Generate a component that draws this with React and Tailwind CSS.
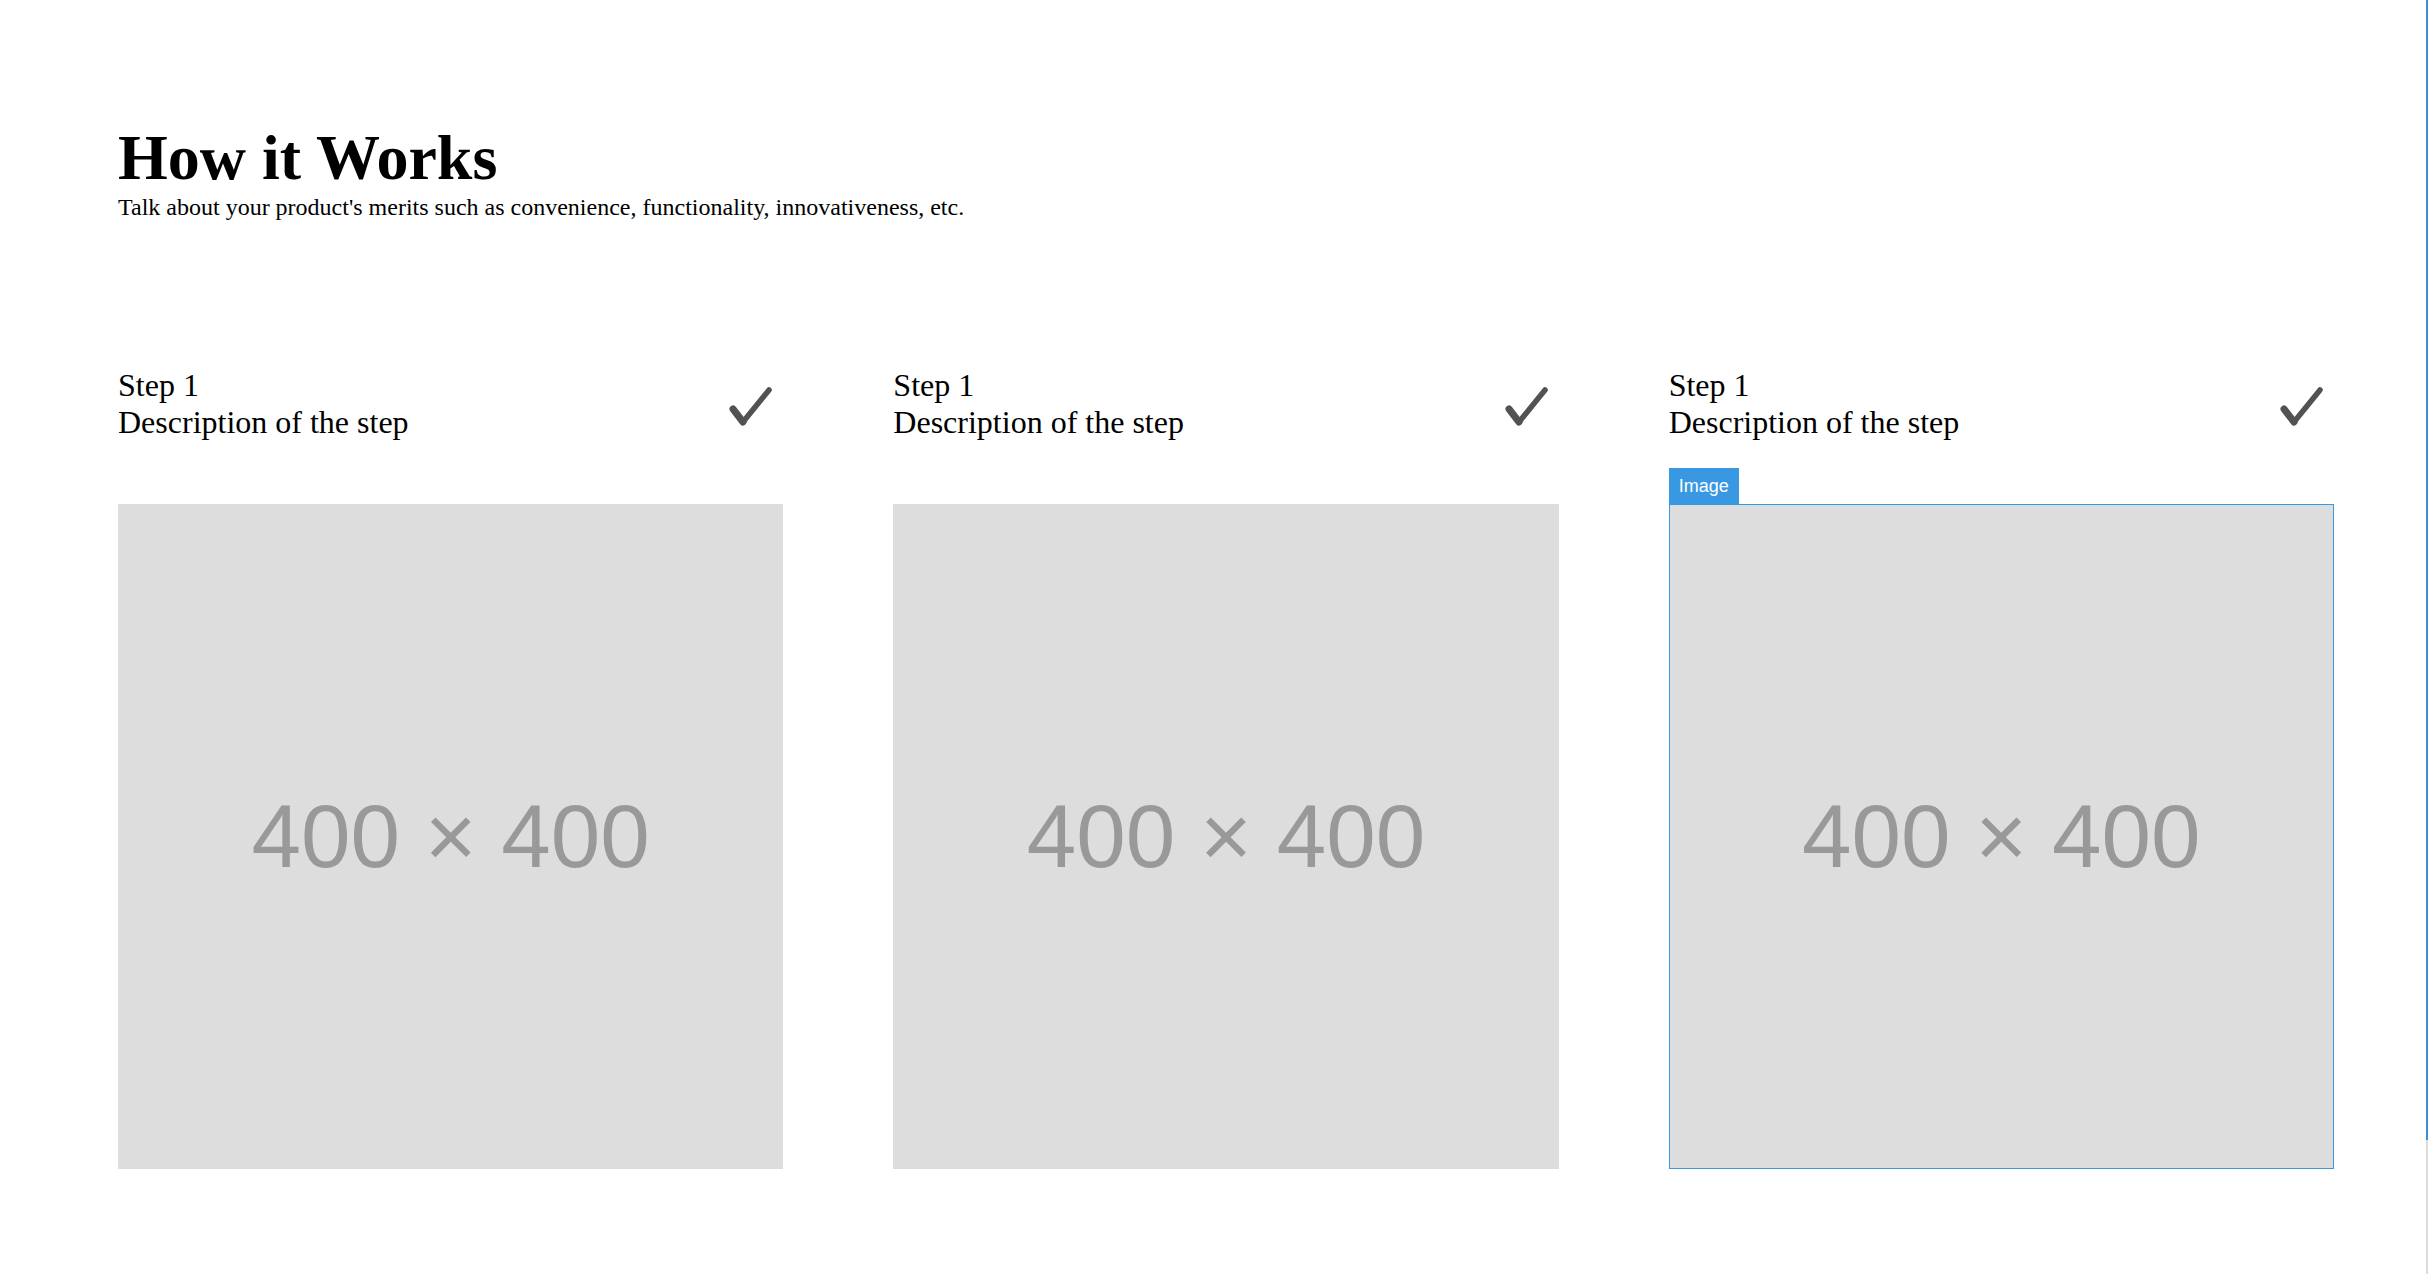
import React from 'react';

const steps = [
    { id: 1, title: 'Step 1', text: 'Description of the step', selected: false },
    { id: 2, title: 'Step 1', text: 'Description of the step', selected: false },
    { id: 3, title: 'Step 1', text: 'Description of the step', selected: true },
];

function CheckIcon() {
    return (
        <svg width="48" height="48" viewBox="0 0 48 48" className="shrink-0 mt-[15px] mr-[9px]">
            <line x1="7" y1="27" x2="17" y2="40" stroke="#525252" strokeWidth="7" strokeLinecap="round" />
            <line x1="17" y1="40" x2="43" y2="8" stroke="#525252" strokeWidth="5.5" strokeLinecap="round" />
        </svg>
    );
}

function Placeholder({ selected }) {
    return (
        <div className="relative mt-[63px]">
            {selected && (
                <div className="absolute left-0 -top-[36px] h-[36px] px-[10px] flex items-center bg-[#3898e2] text-white text-[18px] leading-none font-['Liberation_Sans',Arial,sans-serif]">
                    Image
                </div>
            )}
            <div
                className={
                    'aspect-square w-full bg-[#dddddd] flex items-center justify-center ' +
                    (selected ? 'outline-1 outline-[#3898e2] -outline-offset-1' : '')
                }
            >
                <span className="text-[89px] leading-none text-[#999999] font-['Liberation_Sans',Arial,sans-serif]">
                    400 × 400
                </span>
            </div>
        </div>
    );
}

export default function App() {
    return (
        <div className="relative min-h-screen bg-white text-black leading-[normal] font-['Liberation_Serif','Times_New_Roman',serif]">
            {/* editor frame edge */}
            <div className="absolute right-0 top-0 w-[2px] h-[1140px] bg-[#3a8fd6]" />
            <div className="absolute right-0 top-[1140px] bottom-0 w-[2px] bg-[#dcdcdc]" />

            <section className="pt-[121px] pb-[100px] pl-[118px]">
                {/* Header */}
                <h1 className="m-0 text-[64px] font-bold leading-[normal]">How it Works</h1>
                <p className="-mt-[1px] text-[24px] leading-[normal]">
                    Talk about your product's merits such as convenience, functionality, innovativeness, etc.
                </p>

                {/* Steps */}
                <div className="mt-[146px] w-[2216px] grid grid-cols-3 gap-x-[110px]">
                    {steps.map((step) => (
                        <div key={step.id} className="flex flex-col">
                            <div className="flex justify-between items-start">
                                <div className="text-[32px] leading-[normal]">
                                    <div>{step.title}</div>
                                    <div>{step.text}</div>
                                </div>
                                <CheckIcon />
                            </div>
                            <Placeholder selected={step.selected} />
                        </div>
                    ))}
                </div>
            </section>
        </div>
    );
}
